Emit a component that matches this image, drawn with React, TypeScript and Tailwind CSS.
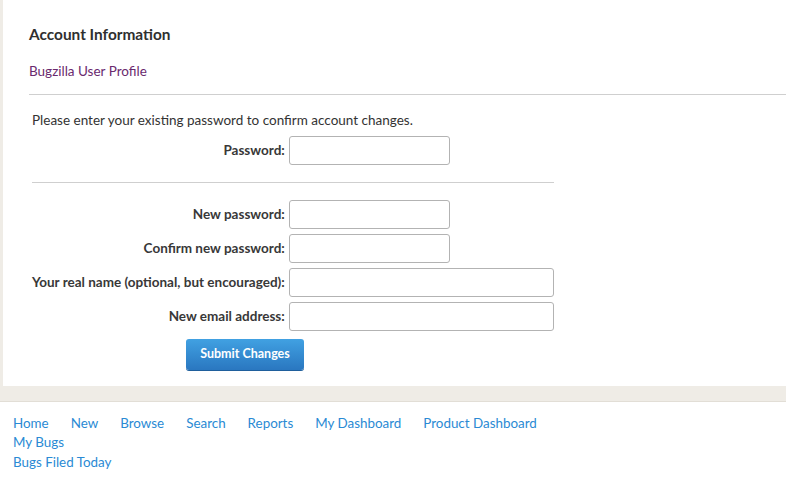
import React from 'react';

const font = { fontFamily: 'Lato, "Open Sans", sans-serif' };

const fields = [
  { label: 'New password:', wide: false },
  { label: 'Confirm new password:', wide: false },
  { label: 'Your real name (optional, but encouraged):', wide: true },
  { label: 'New email address:', wide: true },
];

const navLinks = ['Home', 'New', 'Browse', 'Search', 'Reports', 'My Dashboard', 'Product Dashboard'];

function Field({ label, wide }: { label: string; wide: boolean }) {
  return (
    <tr>
      <th className="pr-[4px] text-right align-middle text-[13.5px] font-bold text-[#383838] whitespace-nowrap py-[2.5px]">
        {label}
      </th>
      <td className="py-[2.5px]">
        <input
          type="text"
          className={`block h-[29px] rounded-[3px] border border-[#b3b3b3] bg-white ${wide ? 'w-[265px]' : 'w-[161px]'}`}
        />
      </td>
    </tr>
  );
}

export default function App() {
  return (
    <div className="min-h-screen bg-white text-[#333]" style={font}>
      <div className="bg-[#efece6] pl-[3px] pb-[15px] border-b border-[#e2ded6]">
        <div className="bg-white pl-[26px] pt-[24px] pb-[16px]">
          <h2 className="text-[15.4px] font-bold leading-[20px] text-[#2f2f2f]">Account Information</h2>
          <a href="#" className="mt-[18px] block text-[13.5px] leading-[18px] text-[#6a2a6e]">
            Bugzilla User Profile
          </a>
          <hr className="mt-[14px] border-t border-[#cfcfcf]" />

          <table className="mt-[16px] ml-[3px] border-collapse">
            <tbody>
              <tr>
                <td colSpan={2} className="pb-[4px] text-[13.5px] leading-[18px] text-[#333]">
                  Please enter your existing password to confirm account changes.
                </td>
              </tr>
              <Field label="Password:" wide={false} />
              <tr>
                <td colSpan={2} className="pt-[14.5px] pb-[15px]">
                  <hr className="border-t border-[#cfcfcf]" />
                </td>
              </tr>
              {fields.map((f) => (
                <Field key={f.label} label={f.label} wide={f.wide} />
              ))}
              <tr>
                <td colSpan={2} className="pt-[5px]">
                  <div className="pl-[154px]">
                    <button className="h-[31px] w-[118px] rounded-[3px] bg-gradient-to-b from-[#41a1e2] to-[#2a77c0] text-[12.5px] font-bold text-white shadow-[0_1px_0_#1f5f9c]">
                      Submit Changes
                    </button>
                  </div>
                </td>
              </tr>
            </tbody>
          </table>
        </div>
      </div>

      <div className="px-[13px] pt-[12px] text-[13.4px] leading-[19.5px] text-[#2a8ad4]">
        <div className="flex gap-x-[22px]">
          {navLinks.map((l) => (
            <a key={l} href="#">
              {l}
            </a>
          ))}
        </div>
        <a href="#" className="block">My Bugs</a>
        <a href="#" className="block">Bugs Filed Today</a>
      </div>
    </div>
  );
}
